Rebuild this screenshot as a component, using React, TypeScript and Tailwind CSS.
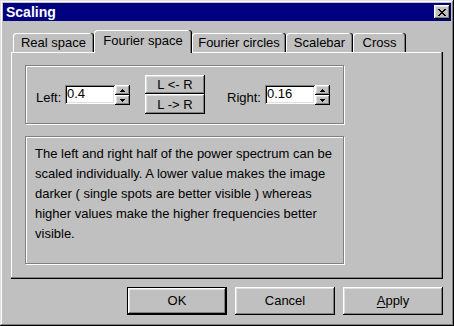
const raised =
  "shadow-[inset_-1px_-1px_#000,inset_1px_1px_#fff,inset_-2px_-2px_#808080,inset_2px_2px_#dfdfdf]";
const sunken =
  "shadow-[inset_1px_1px_#808080,inset_-1px_-1px_#fff,inset_2px_2px_#000,inset_-2px_-2px_#dfdfdf]";
const etched = "border border-[#808080] shadow-[inset_1px_1px_#fff,1px_1px_#fff]";
const tabEdge =
  "shadow-[inset_-1px_0_#000,inset_-2px_0_#808080,inset_1px_1px_#fff] rounded-t-[3px]";

function CloseIcon() {
  const rows = [0, 1, 2, 3, 4, 5, 6];
  return (
    <svg width="8" height="7" viewBox="0 0 8 7">
      {rows.map((i) => (
        <g key={i} fill="#000">
          <rect x={i} y={i} width="2" height="1" />
          <rect x={6 - i} y={i} width="2" height="1" />
        </g>
      ))}
    </svg>
  );
}

function Spin() {
  return (
    <div className="mt-[19px] w-[15px] h-[20px] flex flex-col">
      <div className={`h-[10px] bg-[#c0c0c0] ${raised} flex items-center justify-center`}>
        <svg width="5" height="3" viewBox="0 0 5 3">
          <path d="M2 0h1v1h1v1h1v1H0V2h1V1h1z" fill="#000" />
        </svg>
      </div>
      <div className={`h-[10px] bg-[#c0c0c0] ${raised} flex items-center justify-center`}>
        <svg width="5" height="3" viewBox="0 0 5 3">
          <path d="M0 0h5v1H4v1H3v1H2V2H1V1H0z" fill="#000" />
        </svg>
      </div>
    </div>
  );
}

function Field({ value }: { value: string }) {
  return (
    <div className={`mt-[19px] w-[50px] h-[19px] bg-white ${sunken} pl-[2px] pt-[1px] leading-[15px]`}>
      {value}
    </div>
  );
}

function Tab({ label, w, active }: { label: string; w: string; active?: boolean }) {
  return (
    <div
      className={`${w} ${tabEdge} bg-[#c0c0c0] flex justify-center ${
        active ? "h-[23px] -mb-px relative z-10 pt-[3px]" : "h-[19px] pt-[2px]"
      }`}
    >
      <span className="leading-[15px]">{label}</span>
    </div>
  );
}

export default function App() {
  return (
    <div className="w-[454px] h-[326px] bg-[#c0c0c0] p-[3px] text-[13px] text-black font-['Liberation_Sans',Arial,sans-serif] shadow-[inset_-1px_-1px_#000,inset_1px_1px_#dfdfdf,inset_-2px_-2px_#808080,inset_2px_2px_#fff] flex flex-col">
      {/* title bar */}
      <div className="h-[18px] bg-[#000080] flex items-center justify-between pl-[3px] pr-[1px]">
        <span className="text-white font-bold text-[14px] leading-[18px]">Scaling</span>
        <div className={`w-[16px] h-[14px] bg-[#c0c0c0] ${raised} flex items-center justify-center`}>
          <CloseIcon />
        </div>
      </div>

      {/* tabs */}
      <div className="mt-[9px] ml-[8px] h-[22px] flex items-end">
        <div className="w-[2px]" />
        <Tab label="Real space" w="w-[81px]" />
        <Tab label="Fourier space" w="w-[98px]" active />
        <Tab label="Fourier circles" w="w-[94px]" />
        <Tab label="Scalebar" w="w-[67px]" />
        <Tab label="Cross" w="w-[53px]" />
      </div>

      {/* panel */}
      <div className="ml-[8px] w-[432px] h-[227px] shadow-[inset_-1px_-1px_#000,inset_-2px_-2px_#808080,inset_1px_1px_#fff] pt-[13px] pl-[14px]">
        <div className={`w-[319px] h-[59px] ${etched} pl-[10px] flex items-start`}>
          <span className="w-[29px] mt-[24px] leading-[15px]">Left:</span>
          <Field value="0.4" />
          <Spin />
          <div className="ml-[15px] mt-[9px] w-[60px] flex flex-col">
            <div className={`h-[19px] ${raised} flex items-center justify-center leading-[15px]`}>L &lt;- R</div>
            <div className={`h-[20px] ${raised} flex items-center justify-center leading-[15px]`}>L -&gt; R</div>
          </div>
          <span className="ml-[22px] w-[38px] mt-[24px] leading-[15px]">Right:</span>
          <Field value="0.16" />
          <Spin />
        </div>

        <div className={`mt-[12px] w-[319px] h-[128px] ${etched} pl-[9px] pt-[7px] leading-[20px] whitespace-nowrap`}>
          The left and right half of the power spectrum can be
          <br />
          scaled individually. A lower value makes the image
          <br />
          darker ( single spots are better visible ) whereas
          <br />
          higher values make the higher frequencies better
          <br />
          visible.
        </div>
      </div>

      {/* buttons */}
      <div className="mt-[8px] pr-[8px] flex justify-end gap-[8px]">
        <div className="w-[100px] h-[28px] flex items-center justify-center shadow-[inset_0_0_0_1px_#000,inset_-2px_-2px_#000,inset_2px_2px_#fff,inset_-3px_-3px_#808080,inset_3px_3px_#dfdfdf]">
          OK
        </div>
        <div className={`w-[100px] h-[28px] ${raised} flex items-center justify-center`}>Cancel</div>
        <div className={`w-[100px] h-[28px] ${raised} flex items-center justify-center`}>
          <span>
            <span className="underline underline-offset-2">A</span>pply
          </span>
        </div>
      </div>
    </div>
  );
}
